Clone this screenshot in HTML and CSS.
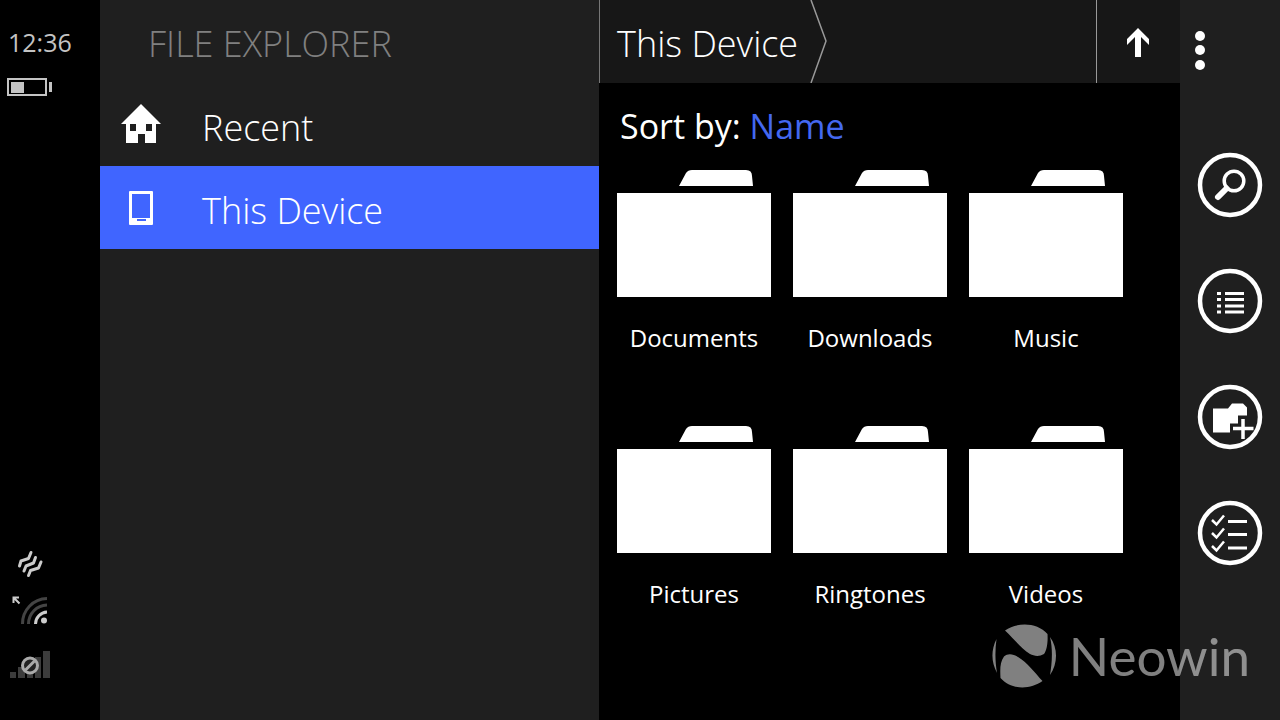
FILE: index.html
```html
<!DOCTYPE html>
<html lang="en">
<head>
<meta charset="utf-8">
<meta name="viewport" content="width=device-width, initial-scale=1">
<title>File Explorer</title>
<link rel="stylesheet" href="styles.css">
</head>
<body>
<svg class="defs" width="0" height="0" aria-hidden="true">
  <symbol id="folder" viewBox="0 0 154 127">
    <path d="M62 16 69 3Q71 0 75 0H129Q135 0 135 6L136 16Z"/>
    <path d="M0 23H154V127H0Z"/>
  </symbol>
</svg>
<div class="phone">
  <aside class="status" aria-label="Status">
    <time class="clock">12:36</time>
    <svg class="battery" viewBox="0 0 46 18" aria-hidden="true">
      <rect x="1" y="1" width="38" height="16" fill="none" stroke="#c4c4c4" stroke-width="2"/>
      <path d="M4 4H17V15H4ZM42 4H45V14H42Z" fill="#c4c4c4"/>
    </svg>
    <div class="signals">
      <svg class="signal" viewBox="0 0 40 28" fill="none" stroke="#ccc" stroke-width="3" stroke-linecap="round" stroke-linejoin="round" aria-hidden="true">
        <path d="M9.500 16 11 11 18.500 8.500 21 2.500M14 21 16 16 23.500 13 25.500 7.500M18.500 25.500 20.500 20.500 28.500 18 31 12"/>
      </svg>
      <svg class="signal signal-wifi" viewBox="0 0 40 36" aria-hidden="true">
        <path d="M3.500 7V1.500H9M4 2 9.500 7.500" fill="none" stroke="#ccc" stroke-width="2"/>
        <g fill="none" stroke-width="3">
          <path d="M12.500 28A25 25 0 0 1 37 2.500M18.500 28A19 19 0 0 1 37 9" stroke="#444"/>
          <path d="M25.500 28A12 12 0 0 1 37 16" stroke="#ccc"/>
        </g>
        <circle cx="34" cy="24.500" r="3" fill="#ccc"/>
      </svg>
      <svg class="signal" viewBox="0 0 40 28" aria-hidden="true">
        <path d="M0 22H6V28H0ZM8 17H15V28H8ZM17 12H23V28H17ZM25 7H31V28H25ZM33 1H40V28H33Z" fill="#3c3c3c"/>
        <circle cx="20" cy="15.500" r="7.500" fill="#222" stroke="#aaa" stroke-width="3"/>
        <path d="M15.500 20 24.500 11" stroke="#aaa" stroke-width="3"/>
      </svg>
    </div>
  </aside>

  <nav class="places" aria-label="Places">
    <h1 class="places-title">FILE EXPLORER</h1>
    <button class="place" type="button">
      <svg class="place-icon" viewBox="0 0 42 42" fill="#fff" aria-hidden="true">
        <path fill-rule="evenodd" d="M21 0 41 20H36V39H25V30H18V39H6V20H1ZM10 20V27H16V20ZM26 20V27H32V20Z"/>
      </svg>
      <span class="place-name">Recent</span>
    </button>
    <button class="place place-active" type="button" aria-current="true">
      <svg class="place-icon" viewBox="0 0 42 42" aria-hidden="true">
        <path fill="#fff" fill-rule="evenodd" d="M10 4H32Q33 4 33 5V37Q33 38 32 38H10Q9 38 9 37V5Q9 4 10 4ZM12 7V31H30V7ZM17 32V34H26V32Z"/>
      </svg>
      <span class="place-name">This Device</span>
    </button>
  </nav>

  <main class="files">
    <header class="path">
      <button class="crumb" type="button">This Device</button>
      <svg class="crumb-edge" viewBox="0 0 18 83" fill="none" stroke="#999" stroke-width="1.500" aria-hidden="true">
        <path d="M1 0 16 41 1 83"/>
      </svg>
      <button class="up" type="button" aria-label="Up one level">
        <svg class="up-icon" viewBox="0 0 24 30" aria-hidden="true">
          <path fill="#fff" d="M12 0 23 11V17L15 9V29H9V9L1 17V11Z"/>
        </svg>
      </button>
    </header>
    <p class="sort">Sort by: <a class="sort-key" href="#">Name</a></p>
    <ul class="folders">
      <li><a class="folder" href="#"><svg class="folder-icon" aria-hidden="true"><use href="#folder"/></svg><span>Documents</span></a></li>
      <li><a class="folder" href="#"><svg class="folder-icon" aria-hidden="true"><use href="#folder"/></svg><span>Downloads</span></a></li>
      <li><a class="folder" href="#"><svg class="folder-icon" aria-hidden="true"><use href="#folder"/></svg><span>Music</span></a></li>
      <li><a class="folder" href="#"><svg class="folder-icon" aria-hidden="true"><use href="#folder"/></svg><span>Pictures</span></a></li>
      <li><a class="folder" href="#"><svg class="folder-icon" aria-hidden="true"><use href="#folder"/></svg><span>Ringtones</span></a></li>
      <li><a class="folder" href="#"><svg class="folder-icon" aria-hidden="true"><use href="#folder"/></svg><span>Videos</span></a></li>
    </ul>
  </main>

  <aside class="appbar" aria-label="Commands">
    <button class="more" type="button" aria-label="More">
      <svg class="more-icon" viewBox="0 0 12 40" fill="#fff" aria-hidden="true">
        <circle cx="6" cy="6" r="5"/><circle cx="6" cy="20" r="5"/><circle cx="6" cy="35" r="5"/>
      </svg>
    </button>
    <button class="command" type="button" aria-label="Search">
      <svg class="command-icon" viewBox="0 0 66 66" fill="none" stroke="#fff" aria-hidden="true">
        <circle cx="33" cy="33" r="30" stroke-width="4.500"/>
        <circle cx="37" cy="29" r="9.800" stroke-width="3.500"/>
        <path d="M29.500 36.500 21 45" stroke-width="6" stroke-linecap="round"/>
      </svg>
    </button>
    <button class="command" type="button" aria-label="List view">
      <svg class="command-icon" viewBox="0 0 66 66" fill="none" stroke="#fff" aria-hidden="true">
        <circle cx="33" cy="33" r="30" stroke-width="4.500"/>
        <path d="M20 25.500H24M28 25.500H47M20 31.500H24M28 31.500H47M20 38H24M28 38H47M20 44H24M28 44H47" stroke-width="3"/>
      </svg>
    </button>
    <button class="command" type="button" aria-label="New folder">
      <svg class="command-icon" viewBox="0 0 66 66" fill="none" stroke="#fff" aria-hidden="true">
        <circle cx="33" cy="33" r="30" stroke-width="4.500"/>
        <path fill="#fff" stroke="none" d="M16 24.500H31L35 19.500H46L50 23.500V31.500H41V39.500H33V48.500H16Z"/>
        <path d="M46 35V55M36 44.500H56.500" stroke-width="3.500"/>
      </svg>
    </button>
    <button class="command" type="button" aria-label="Select">
      <svg class="command-icon" viewBox="0 0 66 66" fill="none" stroke="#fff" aria-hidden="true">
        <circle cx="33" cy="33" r="30" stroke-width="4.500"/>
        <path d="M15 20 19.500 24.500 27 15.500M15 33 19.500 37.500 27 28.500M15 46 19.500 50.500 27 41.500" stroke-width="2.500"/>
        <path d="M31 21.500H50M31 34.500H50M31 48H50" stroke-width="3"/>
      </svg>
    </button>
  </aside>

  <div class="watermark">
    <svg class="watermark-icon" viewBox="0 0 66 66" fill="#fff" aria-hidden="true">
      <path d="M14 7.500C26 -1 46 -1 56.500 11C57 19 56 27 53 31C48 34 43 33 39 31C30 25 23 16 14 7.500ZM9.500 55C9 46 9 39 13 33.500C17 30 22 31 27 34C36 39 44 50 51.500 58C39 67 20 67 9.500 55ZM5.500 16C0 27 0 39 6 50C4 38 4 27 5.500 16ZM59 14C67 25 67 40 59 52C61 41 62 26 59 14Z"/>
    </svg>
    <span>Neowin</span>
  </div>
</div>
</body>
</html>
```
FILE: styles.css
```css
* {
  box-sizing: border-box;
}

body {
  margin: 0;
  background: #000;
  color: #fff;
  font-family: "Open Sans", "Noto Sans", sans-serif;
}

button {
  margin: 0;
  padding: 0;
  border: 0;
  background: none;
  color: inherit;
  font: inherit;
  text-align: left;
  cursor: pointer;
}

a {
  color: inherit;
  text-decoration: none;
}

svg {
  display: block;
  flex: none;
}

.defs {
  position: absolute;
}

.phone {
  position: relative;
  display: grid;
  grid-template-columns: 100px minmax(0, 499fr) minmax(0, 581fr) 100px;
  min-height: 100vh;
}

.status {
  display: flex;
  flex-direction: column;
  padding: 26px 7px 42px;
}

.clock {
  padding-left: 1px;
  color: #c4c4c4;
  font-size: 25px;
  line-height: 32px;
}

.battery {
  width: 46px;
  height: 18px;
  margin-top: 20px;
}

.signals {
  display: flex;
  flex-direction: column;
  gap: 18px;
  margin-top: auto;
  padding-left: 3px;
}

.signal {
  width: 40px;
  height: 28px;
}

.signal-wifi {
  height: 36px;
}

.places {
  background: #1f1f1f;
}

.places-title {
  margin: 0;
  padding: 5px 0 0 48px;
  color: #808080;
  font-size: 36px;
  font-weight: 300;
  line-height: 78px;
}

.place {
  display: flex;
  align-items: center;
  gap: 40px;
  width: 100%;
  height: 83px;
  padding-left: 20px;
  font-size: 36px;
  font-weight: 300;
}

.place-active {
  background: #4065ff;
}

.place-icon {
  width: 42px;
  height: 42px;
}

.place-name {
  padding-top: 6px;
}

.path {
  display: flex;
  height: 83px;
  border-left: 1px solid #777;
  background: #171717;
}

.crumb {
  padding: 3px 12px 0 17px;
  font-size: 36px;
  font-weight: 300;
}

.crumb-edge {
  width: 18px;
  height: 83px;
}

.up {
  display: flex;
  align-items: center;
  justify-content: center;
  width: 84px;
  margin-left: auto;
  padding: 2px 2px 0 0;
  border-left: 1px solid #999;
}

.up-icon {
  width: 24px;
  height: 30px;
}

.sort {
  margin: 0;
  padding: 19px 0 0 21px;
  font-size: 34px;
  line-height: 48px;
}

.sort-key {
  color: #4468f0;
}

.folders {
  display: grid;
  grid-template-columns: repeat(auto-fill, 154px);
  gap: 72px 22px;
  margin: 0;
  padding: 20px 18px;
  list-style: none;
}

.folder {
  display: flex;
  flex-direction: column;
  align-items: center;
  gap: 25px;
  font-size: 24px;
  line-height: 32px;
}

.folder-icon {
  width: 154px;
  height: 127px;
  fill: #fff;
}

.appbar {
  display: flex;
  flex-direction: column;
  align-items: center;
  gap: 50px;
  padding-top: 30px;
  background: #1f1f1f;
}

.more {
  align-self: flex-start;
  margin-bottom: 32px;
  padding-left: 14px;
}

.more-icon {
  width: 12px;
  height: 40px;
}

.command-icon {
  width: 66px;
  height: 66px;
}

.watermark {
  position: absolute;
  right: 30px;
  bottom: 31px;
  display: flex;
  align-items: center;
  gap: 12px;
  font-family: Lato, sans-serif;
  font-size: 53px;
  line-height: 66px;
  opacity: 0.5;
  pointer-events: none;
}

.watermark-icon {
  width: 66px;
  height: 66px;
}
```
